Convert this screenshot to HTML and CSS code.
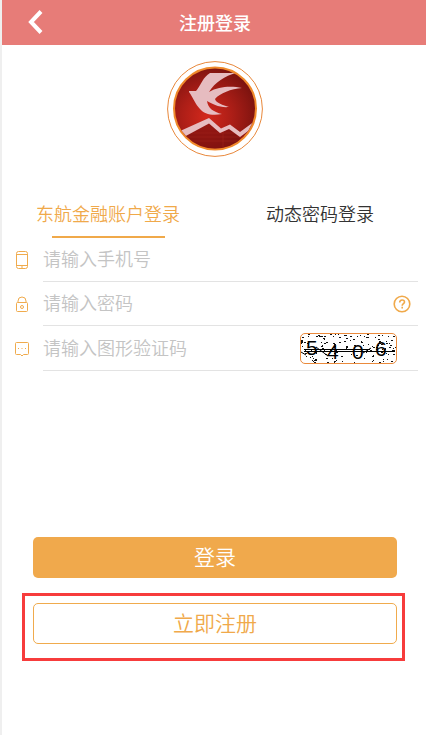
FILE: index.html
```html
<!DOCTYPE html>
<html lang="zh-CN">
<head>
    <meta charset="UTF-8">
    <meta name="viewport" content="width=device-width, initial-scale=1.0">
    <title>注册登录</title>
    <link rel="stylesheet" href="styles.css">
</head>
<body>

<header class="header">
    <button class="back" type="button" aria-label="返回">
        <svg width="16" height="24" viewBox="0 0 16 24" fill="none" stroke="#fff" stroke-width="4">
            <path d="M14 1.500 4 12l10 10.500"/>
        </svg>
    </button>
    <h1>注册登录</h1>
</header>

<main>
    <div class="logo">
        <svg width="96" height="96" viewBox="0 0 96 96">
            <defs>
                <radialGradient id="disc" cx="0.4" cy="0.6" r="0.62">
                    <stop offset="0" stop-color="#d3281c"/>
                    <stop offset="0.5" stop-color="#ac1e17"/>
                    <stop offset="1" stop-color="#7c130f"/>
                </radialGradient>
                <clipPath id="disc-clip"><circle cx="48" cy="47.500" r="40"/></clipPath>
            </defs>
            <circle cx="48" cy="48" r="47.400" fill="#fff" stroke="#e8873a"/>
            <circle cx="48" cy="47.500" r="41" fill="url(#disc)" stroke="#f08a2c" stroke-width="2"/>
            <g clip-path="url(#disc-clip)">
                <path d="M8 76 42 61 54 72 62 67 74 78 92 62V96H8Z" fill="#6e0d0c" opacity="0.55"/>
                <path d="M12 72h72M12 76h72M12 80h72M56 70v20" stroke="#a3241d" stroke-width="0.500"/>
                <path d="M12 70.500 42 57 54 67.500 63 63.500 73 71 92 57V62L73 76 62 68 53 72 42 62.500 16 76.500Z" fill="#e6bcc0"/>
                <path d="M43 12H69C58 15 48 21 42 31 52 25 65 25 75 27 64 28 53 32 48 38 49 42 56 44 62 46 53 47 45 43 40 40 41 47 46 51 55 53 45 55 37 53 33 48 28 43 27 38 22 31V30H29C34 24 36 16 43 12Z" fill="#e6bcc0"/>
            </g>
        </svg>
    </div>

    <nav class="tabs">
        <a class="tab active" href="#account">东航金融账户登录</a>
        <a class="tab" href="#dynamic">动态密码登录</a>
    </nav>

    <form>
        <div class="row">
            <label for="phone" aria-label="手机号">
                <svg width="14" height="20" viewBox="0 0 14 20" fill="none" stroke="#f0ab4d">
                    <rect x="1.500" y="1.500" width="11" height="17" rx="2"/>
                    <path d="M1.500 4.500h11M1.500 15.500h11M6 17h2"/>
                </svg>
            </label>
            <div class="field">
                <input type="tel" id="phone" placeholder="请输入手机号">
            </div>
        </div>
        <div class="row">
            <label for="password" aria-label="密码">
                <svg width="14" height="18" viewBox="0 0 14 18" fill="none" stroke="#f0ab4d">
                    <rect x="1.500" y="7.500" width="11" height="9" rx="1"/>
                    <path d="M3 7.500V6a4 4 0 0 1 8 0V7.500"/>
                    <circle cx="7" cy="12" r="1.500"/>
                </svg>
            </label>
            <div class="field">
                <input type="password" id="password" placeholder="请输入密码">
                <button class="help" type="button" aria-label="帮助">
                    <svg width="18" height="18" viewBox="0 0 18 18" fill="none" stroke="#f0a94a" stroke-width="1.600">
                        <circle cx="9" cy="9" r="7.800"/>
                        <path d="M6.700 7.500C6.700 4.200 11.500 4.300 11.500 7 11.500 8.700 9.200 8.700 9.200 10.800M9.200 11.800V13.500"/>
                    </svg>
                </button>
            </div>
        </div>
        <div class="row">
            <label for="code" aria-label="图形验证码">
                <svg width="16" height="16" viewBox="0 0 16 16" fill="none" stroke="#f0ab4d">
                    <path d="M2.500 1.500h11a1 1 0 0 1 1 1v10a1 1 0 0 1-1 1H9.500L8 15 6.500 13.500H2.500a1 1 0 0 1-1-1v-10a1 1 0 0 1 1-1Z"/>
                    <path d="M4 7.500h1M7.500 7.500h1M11 7.500h1"/>
                </svg>
            </label>
            <div class="field">
                <input type="text" id="code" placeholder="请输入图形验证码">
                <button class="captcha" type="button" aria-label="换一张">
                    <svg width="95" height="29" viewBox="0 0 95 29">
                        <path id="noise" stroke="#111"/>
                        <path d="M3 15.500H69M3 17.500H94M0 18l5 3M15 13l12 9M62 19l8-5" stroke="#000" fill="none"/>
                        <text x="5" y="21">5</text>
                        <text x="26" y="25">4</text>
                        <text x="51" y="25">0</text>
                        <text x="74" y="22">6</text>
                    </svg>
                </button>
            </div>
        </div>

        <button class="btn login" type="submit">登录</button>
        <div class="highlight">
            <button class="btn register" type="button">立即注册</button>
        </div>
    </form>
</main>

<script src="captcha.js"></script>
</body>
</html>
```

FILE: styles.css
```css
* {
    box-sizing: border-box;
}

body {
    margin: 0;
    min-height: 100vh;
    border-left: 2px solid #efefef;
    background-color: #fff;
    color: #333;
    font-family: "Noto Sans CJK SC", sans-serif;
    font-size: 18px;
    font-weight: 350;
}

button,
input {
    padding: 0;
    border: none;
    background: none;
    font: inherit;
}

button {
    cursor: pointer;
}

svg {
    display: block;
}

.header {
    display: grid;
    grid-template-columns: 60px 1fr 58px;
    align-items: center;
    height: 45px;
    padding-bottom: 2px;
    background-color: #e77c78;
    color: #fff;
}

.header h1 {
    margin: 0;
    font-size: 18px;
    font-weight: 500;
    line-height: 26px;
    text-align: center;
}

.back {
    justify-self: start;
    margin-left: 25px;
}

.logo {
    display: flex;
    justify-content: center;
    padding: 16px 0 0 2px;
}

.tabs {
    display: flex;
    margin-top: 35px;
}

.tab {
    display: flex;
    flex: 1;
    flex-direction: column;
    align-items: center;
    height: 46px;
    line-height: 42px;
    color: #333;
    text-decoration: none;
}

.tab.active {
    color: #f0a94a;
}

.tab.active::after {
    content: "";
    width: 113px;
    height: 2px;
    margin-top: 2px;
    background-color: #f0a94a;
}

.row {
    display: flex;
    padding-right: 8px;
}

.row label {
    display: flex;
    flex: 0 0 41px;
    align-items: center;
    justify-content: center;
    padding-right: 2px;
}

.field {
    display: flex;
    flex: 1;
    align-items: center;
    min-width: 0;
    min-height: 44px;
    border-bottom: 1px solid #e3e3e3;
}

.field input {
    flex: 1;
    min-width: 0;
    height: 40px;
    padding-bottom: 3px;
    outline: none;
}

.field input::placeholder {
    color: #c4c4c4;
    opacity: 1;
}

.help {
    margin-right: 7px;
}

.captcha {
    margin: 7px 21px 6px 0;
    border: 1px solid #ea8a3c;
    border-radius: 5px;
    overflow: hidden;
}

.captcha text {
    font-family: "Liberation Sans", Arial, sans-serif;
    font-size: 21px;
    font-weight: 400;
    fill: #000;
}

.btn {
    display: block;
    height: 41px;
    padding-bottom: 2px;
    border-radius: 5px;
    font-size: 21px;
    line-height: 37px;
}

.login {
    width: calc(100% - 60px);
    margin: 166px 29px 0 31px;
    background-color: #f0a94c;
    color: #fff;
}

.highlight {
    margin: 15px 21px 0 20px;
    padding: 7px 5px 14px 8px;
    border: 3px solid #f73c3c;
}

.register {
    width: 100%;
    border: 1px solid #f0ab4d;
    color: #f0a94a;
}
```

FILE: captcha.js
```js
// scatter the captcha noise, fixed seed so it does not flicker on reload
let seed = 5406;

function next(max) {
    seed = (seed * 1103515245 + 12345) % 2147483648;
    return Math.floor(seed / 2147483648 * max);
}

let d = "";
for (let i = 0; i < 150; i++) {
    d += "M" + next(95) + " " + (next(29) + 0.5) + "h" + (1 + next(2));
}
document.getElementById("noise").setAttribute("d", d);
```
